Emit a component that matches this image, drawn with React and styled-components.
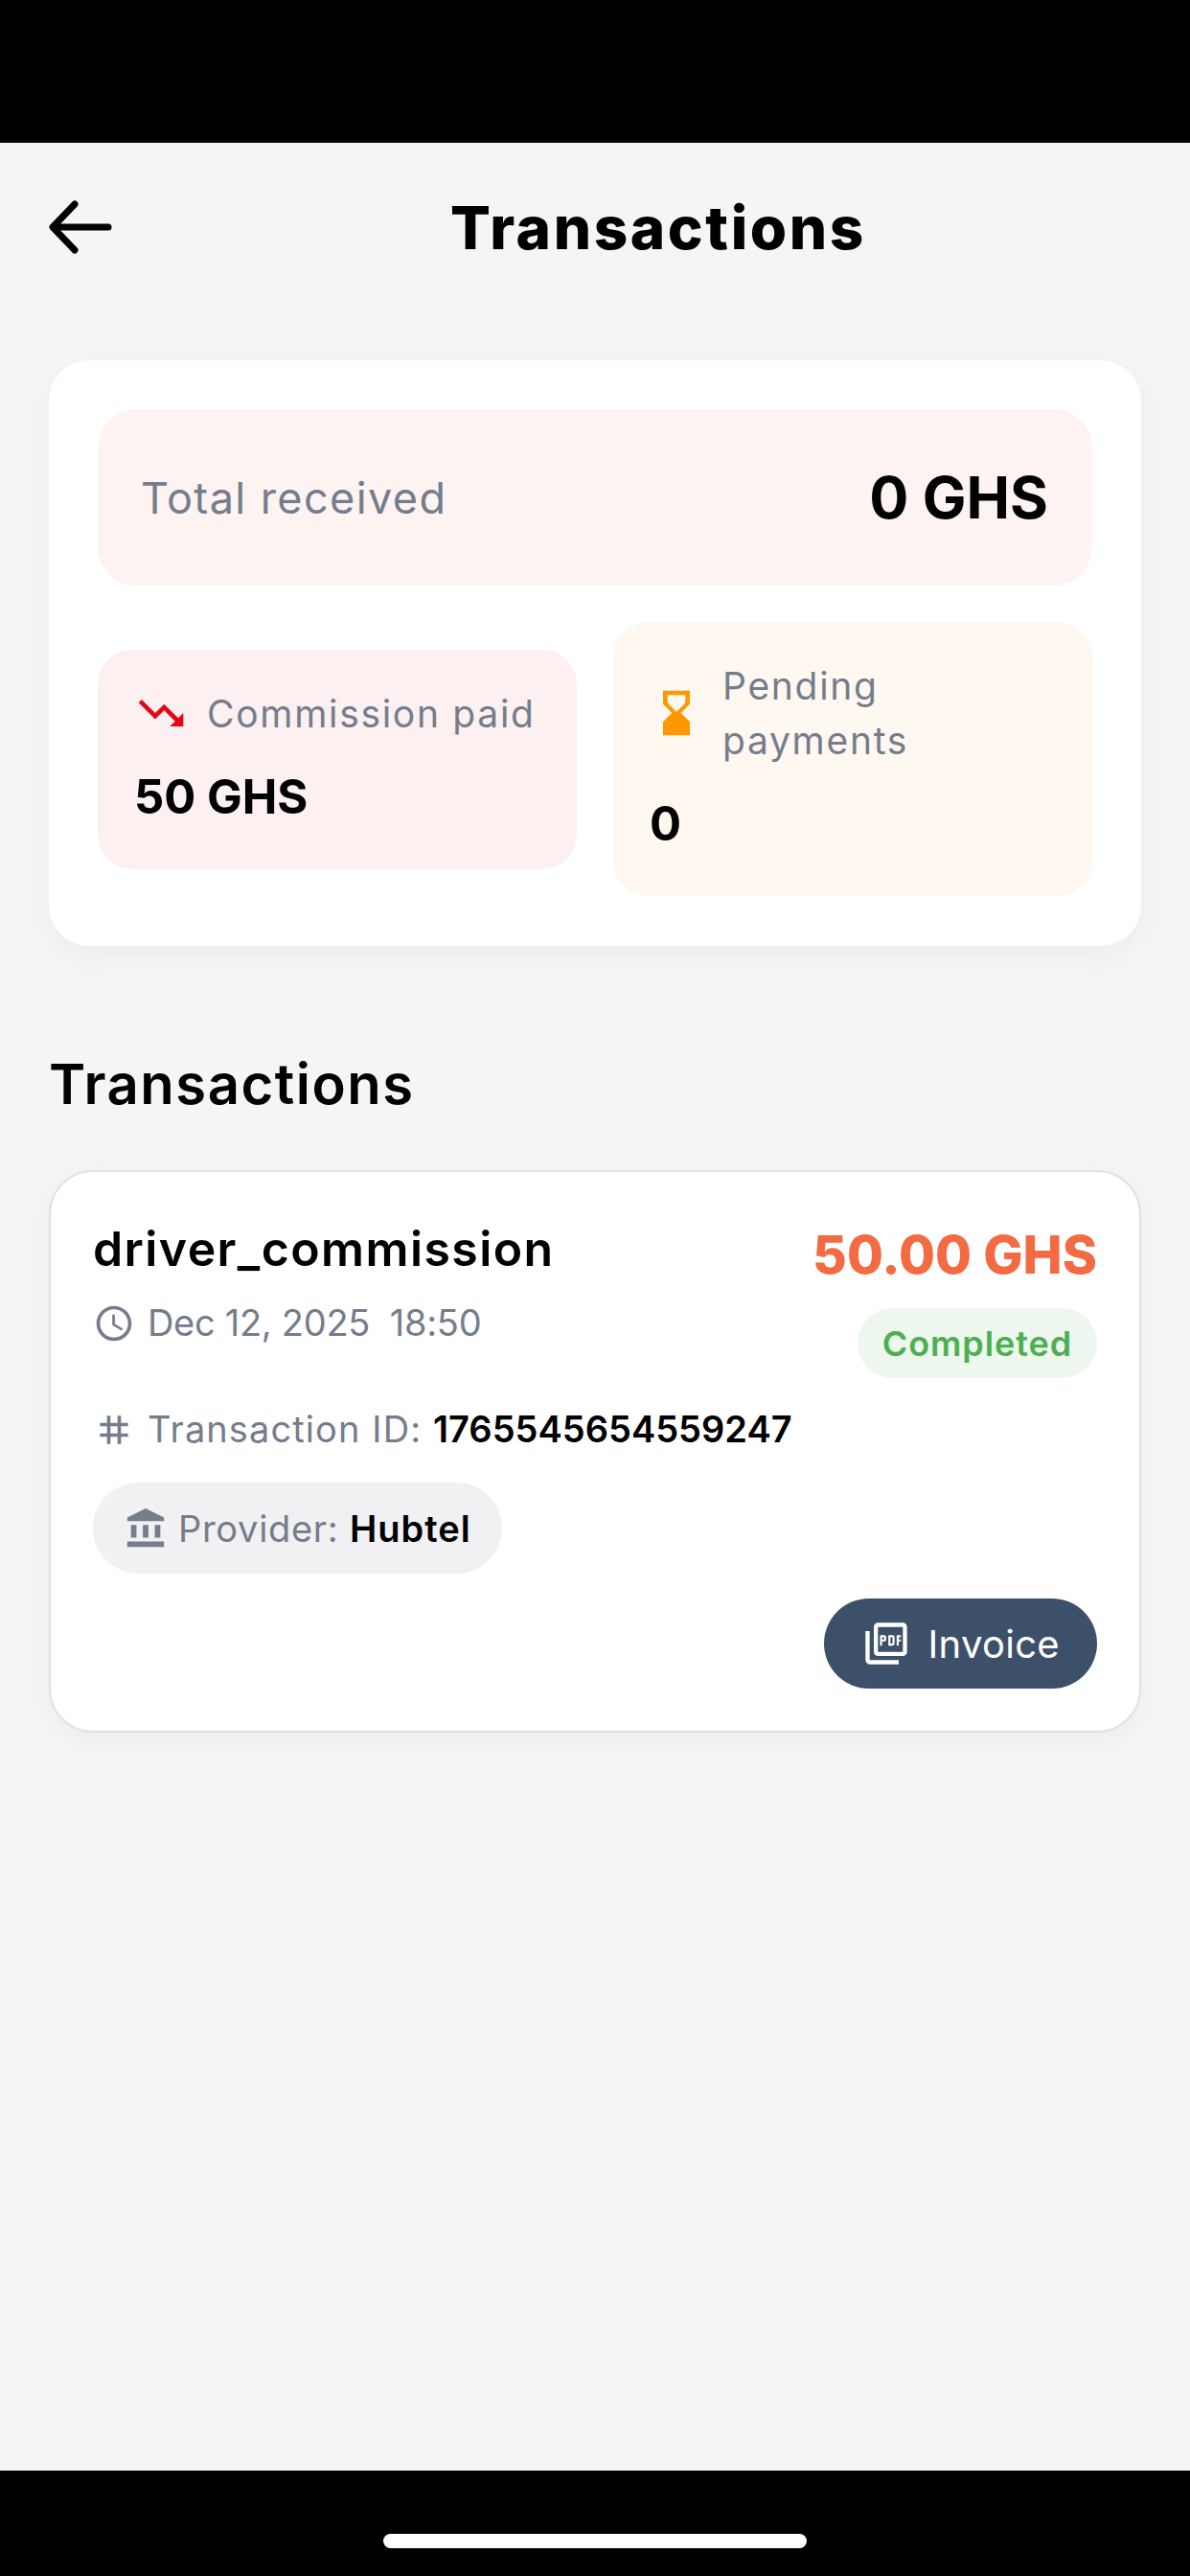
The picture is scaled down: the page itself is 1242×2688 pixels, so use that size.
import React from 'react';
import styled, { createGlobalStyle } from 'styled-components';
import { MdTrendingDown, MdHourglassBottom, MdAccessTime, MdTag, MdAccountBalance, MdOutlinePictureAsPdf } from 'react-icons/md';

const GlobalStyle = createGlobalStyle`
  html, body { margin: 0; padding: 0; background: #000; }
  * { box-sizing: border-box; }
  body { font-family: Inter, "Open Sans", sans-serif; }
`;

const App = () => (
  <Page>
    <GlobalStyle />
    <StatusBar />
    <Content>
      <Header>
        <BackButton>
          <svg width="66" height="58" viewBox="0 0 66 58" fill="none" stroke="#000" strokeWidth="7" strokeLinecap="round" strokeLinejoin="round">
            <path d="M62 29H5" />
            <path d="M27 5L4 29l23 24" />
          </svg>
        </BackButton>
        <Title>Transactions</Title>
      </Header>

      <SummaryCard>
        <TotalBox>
          <TotalLabel>Total received</TotalLabel>
          <TotalValue>0 GHS</TotalValue>
        </TotalBox>
        <StatRow>
          <StatBox $bg="#fcf0f0">
            <StatHead>
              <MdTrendingDown size={56} color="#e30613" />
              <StatLabel>Commission paid</StatLabel>
            </StatHead>
            <StatValue>50 GHS</StatValue>
          </StatBox>
          <StatBox $bg="#fff8f0">
            <StatHead>
              <MdHourglassBottom size={56} color="#ff9800" />
              <StatLabel>Pending payments</StatLabel>
            </StatHead>
            <StatValue>0</StatValue>
          </StatBox>
        </StatRow>
      </SummaryCard>

      <SectionTitle>Transactions</SectionTitle>

      <TransactionCard>
        <TopRow>
          <div>
            <TxName>driver_commission</TxName>
            <MetaRow>
              <MdAccessTime size={44} />
              <span>Dec 12, 2025&nbsp;&nbsp;18:50</span>
            </MetaRow>
          </div>
          <AmountColumn>
            <Amount>50.00 GHS</Amount>
            <StatusBadge>Completed</StatusBadge>
          </AmountColumn>
        </TopRow>
        <IdRow>
          <MdTag size={44} />
          <span>Transaction ID: <IdNumber>1765545654559247</IdNumber></span>
        </IdRow>
        <ProviderPill>
          <MdAccountBalance size={46} />
          <span>Provider: <ProviderName>Hubtel</ProviderName></span>
        </ProviderPill>
        <Footer>
          <InvoiceButton>
            <MdOutlinePictureAsPdf size={52} />
            Invoice
          </InvoiceButton>
        </Footer>
      </TransactionCard>
    </Content>
    <BottomBar>
      <HomeIndicator />
    </BottomBar>
  </Page>
);

export default App;

const Page = styled.div`
  display: flex;
  flex-direction: column;
  width: 1242px;
  height: 2688px;
  overflow: hidden;
  background: #f5f5f5;
`;

const StatusBar = styled.div`
  height: 149px;
  background: #000;
`;

const Content = styled.main`
  flex: 1;
  padding: 0 51px;
`;

const BottomBar = styled.div`
  display: flex;
  justify-content: center;
  height: 110px;
  padding-top: 66px;
  background: #000;
`;

const HomeIndicator = styled.div`
  width: 442px;
  height: 15px;
  border-radius: 8px;
  background: #fff;
`;

const Header = styled.header`
  position: relative;
  display: flex;
  align-items: center;
  justify-content: center;
  height: 176px;
  margin-bottom: 51px;
`;

const BackButton = styled.button`
  position: absolute;
  left: 0;
  top: 59px;
  padding: 0;
  border: 0;
  background: none;
  line-height: 0;
`;

const Title = styled.h1`
  margin: 0 0 0 132px;
  font-size: 62px;
  font-weight: 800;
  line-height: 1.5;
  letter-spacing: 2.6px;
  color: #000;
`;

const SummaryCard = styled.section`
  display: flex;
  flex-direction: column;
  gap: 38px;
  height: 611px;
  padding: 51px;
  border-radius: 42px;
  background: #fff;
  box-shadow: 0 12px 40px rgba(0, 0, 0, 0.04);
`;

const TotalBox = styled.div`
  display: flex;
  align-items: center;
  justify-content: space-between;
  height: 184px;
  padding: 0 46px 0 45px;
  border-radius: 40px;
  background: #fdf3f1;
`;

const TotalLabel = styled.span`
  font-size: 45px;
  letter-spacing: 1.4px;
  color: #757d8c;
`;

const TotalValue = styled.span`
  font-size: 61px;
  font-weight: 700;
  color: #000;
`;

const StatRow = styled.div`
  display: grid;
  grid-template-columns: 500px 500px;
  justify-content: space-between;
  align-items: center;
`;

const StatBox = styled.div`
  display: flex;
  flex-direction: column;
  gap: 21px;
  padding: 38px;
  border-radius: 36px;
  background: ${props => props.$bg};
`;

const StatHead = styled.div`
  display: flex;
  align-items: center;
  gap: 20px;
  svg { flex-shrink: 0; }
`;

const StatLabel = styled.span`
  font-size: 39px;
  line-height: 57px;
  letter-spacing: 1.7px;
  color: #757d8c;
`;

const StatValue = styled.div`
  font-size: 49px;
  font-weight: 700;
  line-height: 75px;
  color: #000;
`;

const SectionTitle = styled.h2`
  margin: 101px 0 46px;
  font-size: 58px;
  font-weight: 600;
  line-height: 87px;
  letter-spacing: 1.5px;
  color: #000;
`;

const TransactionCard = styled.section`
  display: flex;
  flex-direction: column;
  height: 587px;
  padding: 44px 44px 44px;
  border: 2px solid #e2e2e2;
  border-radius: 46px;
  background: #fff;
  box-shadow: 0 8px 30px rgba(0, 0, 0, 0.04);
`;

const TopRow = styled.div`
  display: flex;
  justify-content: space-between;
`;

const TxName = styled.div`
  font-size: 50px;
  font-weight: 600;
  line-height: 72px;
  letter-spacing: 1.4px;
  color: #000;
`;

const MetaRow = styled.div`
  display: flex;
  align-items: center;
  gap: 13px;
  margin-top: 13px;
  font-size: 38px;
  line-height: 57px;
  letter-spacing: -0.3px;
  color: #757d8c;
`;

const AmountColumn = styled.div`
  display: flex;
  flex-direction: column;
  align-items: flex-end;
  gap: 14px;
`;

const Amount = styled.div`
  font-size: 55px;
  font-weight: 800;
  line-height: 84px;
  color: #f26b43;
`;

const StatusBadge = styled.div`
  display: flex;
  align-items: center;
  height: 73px;
  padding: 0 26px;
  border-radius: 37px;
  background: #edf7ee;
  font-size: 36px;
  font-weight: 600;
  letter-spacing: 0.9px;
  color: #4caf50;
`;

const IdRow = styled(MetaRow)`
  margin-top: 25px;
  letter-spacing: 1.1px;
`;

const IdNumber = styled.b`
  font-weight: 600;
  letter-spacing: 0;
  color: #000;
`;

const ProviderPill = styled.div`
  display: flex;
  align-self: flex-start;
  align-items: center;
  gap: 11px;
  height: 95px;
  margin-top: 27px;
  padding: 0 32px;
  border-radius: 48px;
  background: #f1f1f3;
  font-size: 38px;
  letter-spacing: 0.7px;
  color: #757d8c;
`;

const ProviderName = styled.b`
  font-weight: 600;
  letter-spacing: 1px;
  color: #000;
`;

const Footer = styled.div`
  display: flex;
  justify-content: flex-end;
  margin-top: 26px;
`;

const InvoiceButton = styled.button`
  display: flex;
  align-items: center;
  gap: 18px;
  height: 94px;
  padding: 0 39px;
  border: 0;
  border-radius: 47px;
  background: #3d5069;
  font: 400 40px Inter, sans-serif;
  letter-spacing: 0.3px;
  color: #fff;
`;
